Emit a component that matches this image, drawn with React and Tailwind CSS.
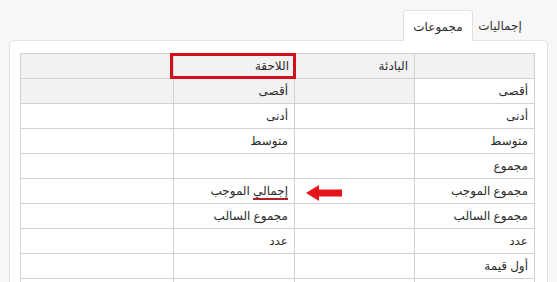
import React from "react";

const rows = [
  { name: "أقصى", mid: "", sfx: "أقصى", shaded: true },
  { name: "أدنى", mid: "", sfx: "أدنى" },
  { name: "متوسط", mid: "", sfx: "متوسط" },
  { name: "مجموع", mid: "", sfx: "" },
  { name: "مجموع الموجب", mid: "", sfx: "إجمالي الموجب", marked: true },
  { name: "مجموع السالب", mid: "", sfx: "مجموع السالب" },
  { name: "عدد", mid: "", sfx: "عدد" },
  { name: "أول قيمة", mid: "", sfx: "" },
  { name: "", mid: "", sfx: "" },
];

function Arrow() {
  return (
    <svg width="36" height="16" viewBox="0 0 36 16" className="absolute right-[-54px] top-[3px]">
      <path d="M0 8 L13 0 L13 4.5 L36 4.5 L36 11.5 L13 11.5 L13 16 Z" fill="#e5141b" />
    </svg>
  );
}

export default function App() {
  return (
    <div
      dir="rtl"
      className="w-[557px] h-[282px] overflow-hidden bg-[#f7f7f7] text-[12px] text-[#2a2a2a]"
      style={{ fontFamily: '"Noto Sans", "DejaVu Sans", sans-serif' }}
    >
      {/* tab strip */}
      <div className="flex pr-[30px] pt-[10px] h-[41px]">
        <div className="w-[54px] flex justify-center pt-[7px] text-[#333]">إجماليات</div>
        <div className="w-[70px] h-[31px] bg-white border border-b-0 border-[#e2e2e2] rounded-t-[3px] flex justify-center pt-[7px] relative z-10">
          مجموعات
        </div>
      </div>

      {/* panel */}
      <div className="mx-[9px] -mt-px bg-white border border-[#e2e2e2] rounded-[5px] pt-[12px] px-[12px] h-[260px]">
        <table className="w-[514px] border-collapse table-fixed">
          <colgroup>
            <col className="w-[120px]" />
            <col className="w-[120px]" />
            <col className="w-[121px]" />
            <col className="w-[153px]" />
          </colgroup>
          <thead>
            <tr className="h-[25px] bg-[#f2f2f2]">
              <th className="border border-[#d2d2d2]" />
              <th className="border border-[#d2d2d2] font-normal text-right px-[6px]">البادئة</th>
              <th className="border border-[#d2d2d2] font-normal text-right p-0 relative">
                <div className="absolute inset-[-1px] right-[-2px] left-[-4px] border-[3px] border-[#d4101d] px-[4px] flex items-center">
                  اللاحقة
                </div>
              </th>
              <th className="border border-[#d2d2d2]" />
            </tr>
          </thead>
          <tbody>
            {rows.map((r, i) => (
              <tr key={i} className="h-[25px]">
                <td className="border border-[#d2d2d2] px-[6px] bg-white">{r.name}</td>
                <td className={`border border-[#d2d2d2] px-[6px] ${r.shaded ? "bg-[#f2f2f2]" : "bg-white"}`}>{r.mid}</td>
                <td className={`border border-[#d2d2d2] px-[6px] ${r.shaded ? "bg-[#f2f2f2]" : "bg-white"}`}>
                  {r.marked ? (
                    <span className="relative inline-block">
                      <span className="border-b-2 border-[#b0202a] leading-[15px] inline-block">إجمالي</span> الموجب
                      <Arrow />
                    </span>
                  ) : (
                    r.sfx
                  )}
                </td>
                <td className={`border border-[#d2d2d2] ${r.shaded ? "bg-[#f2f2f2]" : "bg-white"}`} />
              </tr>
            ))}
          </tbody>
        </table>
      </div>
    </div>
  );
}
